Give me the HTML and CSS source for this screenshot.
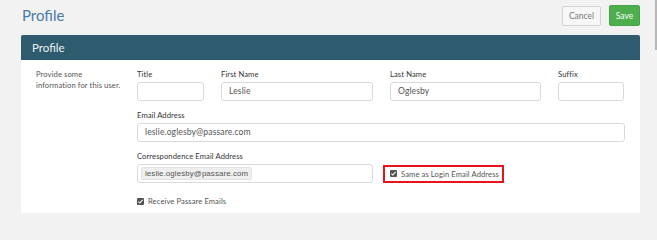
FILE: index.html
```html
<!DOCTYPE html>
<html>
<head>
<meta charset="utf-8">
<link rel="stylesheet" href="styles.css">
</head>
<body>
<div class="page">
  <div class="topbar">
    <h1 class="page-title">Profile</h1>
    <div class="actions">
      <button class="btn btn-cancel">Cancel</button>
      <button class="btn btn-save">Save</button>
    </div>
  </div>
  <div class="card">
    <div class="card-header">Profile</div>
    <div class="card-body">
      <div class="desc">Provide some<br>information for this user.</div>
      <div class="form">
        <div class="row names">
          <div class="field"><label class="lbl">Title</label><div class="input"></div></div>
          <div class="field"><label class="lbl">First Name</label><div class="input">Leslie</div></div>
          <div class="field"><label class="lbl">Last Name</label><div class="input">Oglesby</div></div>
          <div class="field"><label class="lbl">Suffix</label><div class="input"></div></div>
        </div>
        <div class="field"><label class="lbl">Email Address</label><div class="input">leslie.oglesby@passare.com</div></div>
        <div class="field">
          <label class="lbl">Correspondence Email Address</label>
          <div class="corr-row">
            <div class="input corr-input"><span class="pill">leslie.oglesby@passare.com</span></div>
            <div class="highlight">
              <span class="check"><svg viewBox="0 0 8 8" width="7" height="7"><path d="M1.6 4.2 L3.2 5.8 L6.4 2.2" fill="none" stroke="#fff" stroke-width="1.2"/></svg></span>
              <span class="chk-label">Same as Login Email Address</span>
            </div>
          </div>
        </div>
        <div class="check-row">
          <span class="check"><svg viewBox="0 0 8 8" width="7" height="7"><path d="M1.6 4.2 L3.2 5.8 L6.4 2.2" fill="none" stroke="#fff" stroke-width="1.2"/></svg></span>
          <span class="chk-label">Receive Passare Emails</span>
        </div>
      </div>
    </div>
  </div>
</div>
<div class="scroll-thumb"></div>
</body>
</html>
```
FILE: styles.css
```css
html, body {
  margin: 0;
  padding: 0;
  height: 213px;
  background: #f2f2f2;
  font-family: Lato, "Open Sans", Arial, sans-serif;
  overflow: hidden;
}
.page {
  padding: 5px 17px 0 21px;
}
.topbar {
  display: flex;
  justify-content: space-between;
  align-items: flex-start;
  height: 30px;
}
.page-title {
  margin: 1px 0 0 1px;
  font-size: 15px;
  font-weight: 400;
  color: #4a79a5;
  line-height: 18px;
}
.actions {
  display: flex;
  gap: 8px;
  align-items: flex-start;
}
.btn {
  font-family: Lato, Arial, sans-serif;
  font-size: 8.5px;
  border-radius: 2px;
  padding: 0;
  cursor: pointer;
}
.btn-cancel {
  margin-top: 1px;
  width: 39px;
  height: 20px;
  background: #f7f7f7;
  border: 1px solid #d4d4d4;
  color: #777;
}
.btn-save {
  width: 31px;
  height: 21px;
  background: #4cae4c;
  border: 1px solid #46a546;
  color: #fff;
}
.card {
  background: #fff;
  border-radius: 2px 2px 0 0;
}
.card-header {
  height: 25px;
  background: #2e5b6e;
  color: #eef3f5;
  font-size: 11.5px;
  line-height: 25px;
  padding-left: 11px;
  border-radius: 2px 2px 0 0;
}
.card-body {
  display: flex;
  padding: 9px 15px 40px 15px;
}
.desc {
  width: 101px;
  flex: none;
  font-size: 7.6px;
  letter-spacing: 0.1px;
  line-height: 11px;
  color: #555;
}
.form {
  width: 488px;
  display: flex;
  flex-direction: column;
  gap: 9px;
}
.row.names {
  display: grid;
  grid-template-columns: 67px 152px 151px 66px;
  column-gap: 17px;
}
.field {
  display: flex;
  flex-direction: column;
}
.lbl {
  font-size: 7.6px;
  letter-spacing: 0.1px;
  line-height: 10px;
  color: #333;
  margin-bottom: 3px;
}
.input {
  box-sizing: border-box;
  height: 19px;
  border: 1px solid #d9d9d9;
  border-radius: 3px;
  background: #fff;
  font-size: 8.6px;
  letter-spacing: 0.1px;
  color: #555;
  padding-left: 7px;
  line-height: 17px;
}
.corr-row {
  display: flex;
  align-items: center;
  gap: 10px;
}
.corr-input {
  width: 236px;
  padding-left: 3px;
  display: flex;
  align-items: center;
}
.pill {
  font-family: "Liberation Sans", Arial, sans-serif;
  font-size: 7.9px;
  line-height: 11px;
  background: #efefef;
  border: 1px solid #e2e2e2;
  border-radius: 2px;
  padding: 0 3px;
  color: #555;
}
.highlight {
  box-sizing: border-box;
  width: 121px;
  height: 18px;
  border: 2px solid #e8141b;
  display: flex;
  align-items: center;
  padding-left: 5px;
  gap: 4px;
}
.check {
  width: 7px;
  height: 7px;
  background: #555;
  border-radius: 1px;
  display: flex;
  align-items: center;
  justify-content: center;
  flex: none;
}
.check svg { display: block; }
.chk-label {
  font-size: 7.6px;
  letter-spacing: 0.1px;
  line-height: 10px;
  color: #555;
}
.check-row {
  display: flex;
  align-items: center;
  gap: 4px;
  margin-top: 4px;
}
.scroll-thumb {
  position: absolute;
  top: 0;
  right: 0;
  width: 2px;
  height: 50px;
  background: #b8b8b8;
}
```
